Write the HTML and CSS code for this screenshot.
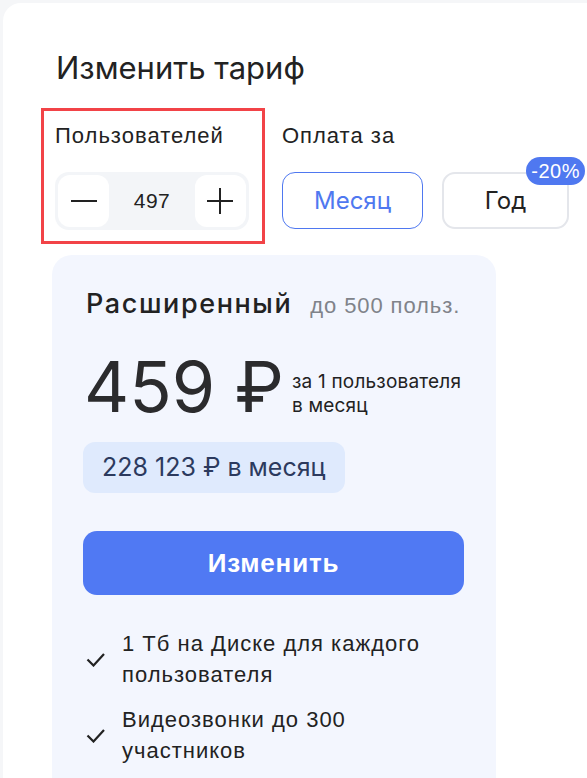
FILE: index.html
```html
<!DOCTYPE html>
<html lang="ru">
<head>
  <meta charset="UTF-8">
  <meta name="viewport" content="width=device-width, initial-scale=1.0">
  <title>Изменить тариф</title>
  <link rel="stylesheet" href="styles.css">
</head>
<body>

  <div class="panel">
    <h1 class="title">Изменить тариф</h1>

    <div class="controls">
      <div class="users-box">
        <div class="label">Пользователей</div>
        <div class="stepper">
          <button class="step-btn" aria-label="Меньше">
            <svg width="26" height="26" viewBox="0 0 26 26"><path d="M0 13h26" stroke="#222" stroke-width="2"/></svg>
          </button>
          <span class="step-value">497</span>
          <button class="step-btn" aria-label="Больше">
            <svg width="26" height="26" viewBox="0 0 26 26"><path d="M0 13h26M13 0v26" stroke="#222" stroke-width="2"/></svg>
          </button>
        </div>
      </div>

      <div class="period">
        <div class="label">Оплата за</div>
        <div class="period-options">
          <button class="period-btn active">Месяц</button>
          <button class="period-btn">Год<span class="badge">-20%</span></button>
        </div>
      </div>
    </div>

    <div class="plan">
      <div class="plan-head">
        <span class="plan-name">Расширенный</span>
        <span class="plan-limit">до 500 польз.</span>
      </div>

      <div class="price-row">
        <span class="price">459 ₽</span>
        <span class="price-note">за 1 пользователя<br>в месяц</span>
      </div>

      <div class="total">228 123 ₽ в месяц</div>

      <button class="change-btn">Изменить</button>

      <ul class="features">
        <li>
          <svg class="check" width="19" height="15" viewBox="0 0 19 15"><path d="M1.5 7.5l6 6L18 2" fill="none" stroke="#222" stroke-width="2.2"/></svg>
          <span>1 Тб на Диске для каждого пользователя</span>
        </li>
        <li>
          <svg class="check" width="19" height="15" viewBox="0 0 19 15"><path d="M1.5 7.5l6 6L18 2" fill="none" stroke="#222" stroke-width="2.2"/></svg>
          <span>Видеозвонки до 300 участников</span>
        </li>
      </ul>
    </div>
  </div>

</body>
</html>
```

FILE: styles.css
```css
body {
  margin: 0;
  padding: 3px 0 0 3px;
  background-color: #f5f6f8;
  font-family: "Liberation Sans", Arial, sans-serif;
  color: #222;
  overflow: hidden;
}

button {
  font-family: inherit;
  cursor: pointer;
}

.panel {
  background-color: #fff;
  border-radius: 18px 0 0 0;
  padding: 45px 0 0 38px;
  min-height: 800px;
}

.title {
  font-family: Inter, sans-serif;
  font-weight: 400;
  font-size: 31px;
  line-height: 40px;
  margin: 0 0 20px 15px;
  color: #222;
}

.controls {
  display: flex;
  gap: 17px;
}

.label {
  font-size: 22px;
  letter-spacing: 1px;
  line-height: 26px;
  margin-bottom: 23px;
}

.users-box {
  border: 3px solid #f24347;
  padding: 12px 13px 11px 11px;
}

.stepper {
  display: flex;
  align-items: center;
  justify-content: space-between;
  width: 194px;
  height: 58px;
  padding: 3px;
  box-sizing: border-box;
  background-color: #f3f5f8;
  border-radius: 14px;
}

.step-btn {
  width: 51px;
  height: 52px;
  border: none;
  border-radius: 12px;
  background-color: #fff;
  display: flex;
  align-items: center;
  justify-content: center;
  padding: 0;
}

.step-value {
  font-size: 21px;
  letter-spacing: 0.5px;
}

.period {
  padding-top: 15px;
}

.period-options {
  display: flex;
  gap: 19px;
}

.period-btn {
  position: relative;
  height: 57px;
  border: 2px solid #e4e6eb;
  border-radius: 13px;
  background-color: #fff;
  font-family: Inter, sans-serif;
  font-size: 24px;
  color: #222;
  width: 127px;
  padding: 0;
}

.period-btn.active {
  width: 141px;
  border: 1.5px solid #4f78f0;
  color: #4f78f0;
}

.badge {
  position: absolute;
  top: -17px;
  right: -18px;
  background-color: #4f78f0;
  color: #fff;
  font-family: "Liberation Sans", Arial, sans-serif;
  font-size: 20px;
  letter-spacing: 0.5px;
  line-height: 28px;
  padding: 0 5px;
  border-radius: 14px;
}

.plan {
  width: 444px;
  box-sizing: border-box;
  margin: 11px 0 0 11px;
  padding: 32px 31px 40px 31px;
  background-color: #f3f6fe;
  border-radius: 20px;
}

.plan-head {
  display: flex;
  align-items: baseline;
  gap: 18px;
  padding-left: 3px;
}

.plan-name {
  font-family: Inter, sans-serif;
  font-weight: 500;
  font-size: 27px;
  letter-spacing: 1.6px;
}

.plan-limit {
  font-size: 22px;
  letter-spacing: 0.9px;
  color: #80838a;
}

.price-row {
  display: flex;
  align-items: center;
  gap: 8px;
  margin-top: 25px;
  padding-left: 1px;
  white-space: nowrap;
}

.price {
  flex: none;
  font-family: Inter, sans-serif;
  font-size: 70px;
  line-height: 84px;
  color: #2b2b2d;
}

.price-note {
  flex: none;
  font-family: Inter, sans-serif;
  font-size: 19px;
  letter-spacing: 0.2px;
  line-height: 24px;
  margin-top: 14px;
}

.total {
  display: inline-block;
  margin-top: 13px;
  padding: 0 19px;
  height: 51px;
  line-height: 51px;
  font-family: Inter, sans-serif;
  font-size: 25px;
  color: #2c3a5e;
  background-color: #dfeafd;
  border-radius: 12px;
}

.change-btn {
  display: block;
  width: 381px;
  height: 64px;
  margin-top: 38px;
  border: none;
  border-radius: 14px;
  background-color: #5079f3;
  color: #fff;
  font-size: 26px;
  letter-spacing: 0.8px;
  font-weight: 700;
}

.features {
  list-style: none;
  margin: 33px 0 0;
  padding: 0;
}

.features li {
  display: flex;
  align-items: center;
  gap: 17px;
  font-size: 22px;
  letter-spacing: 1px;
  line-height: 31px;
  margin-bottom: 14px;
  padding-left: 3px;
}

.features span {
  max-width: 330px;
}

.check {
  flex: none;
}
```
